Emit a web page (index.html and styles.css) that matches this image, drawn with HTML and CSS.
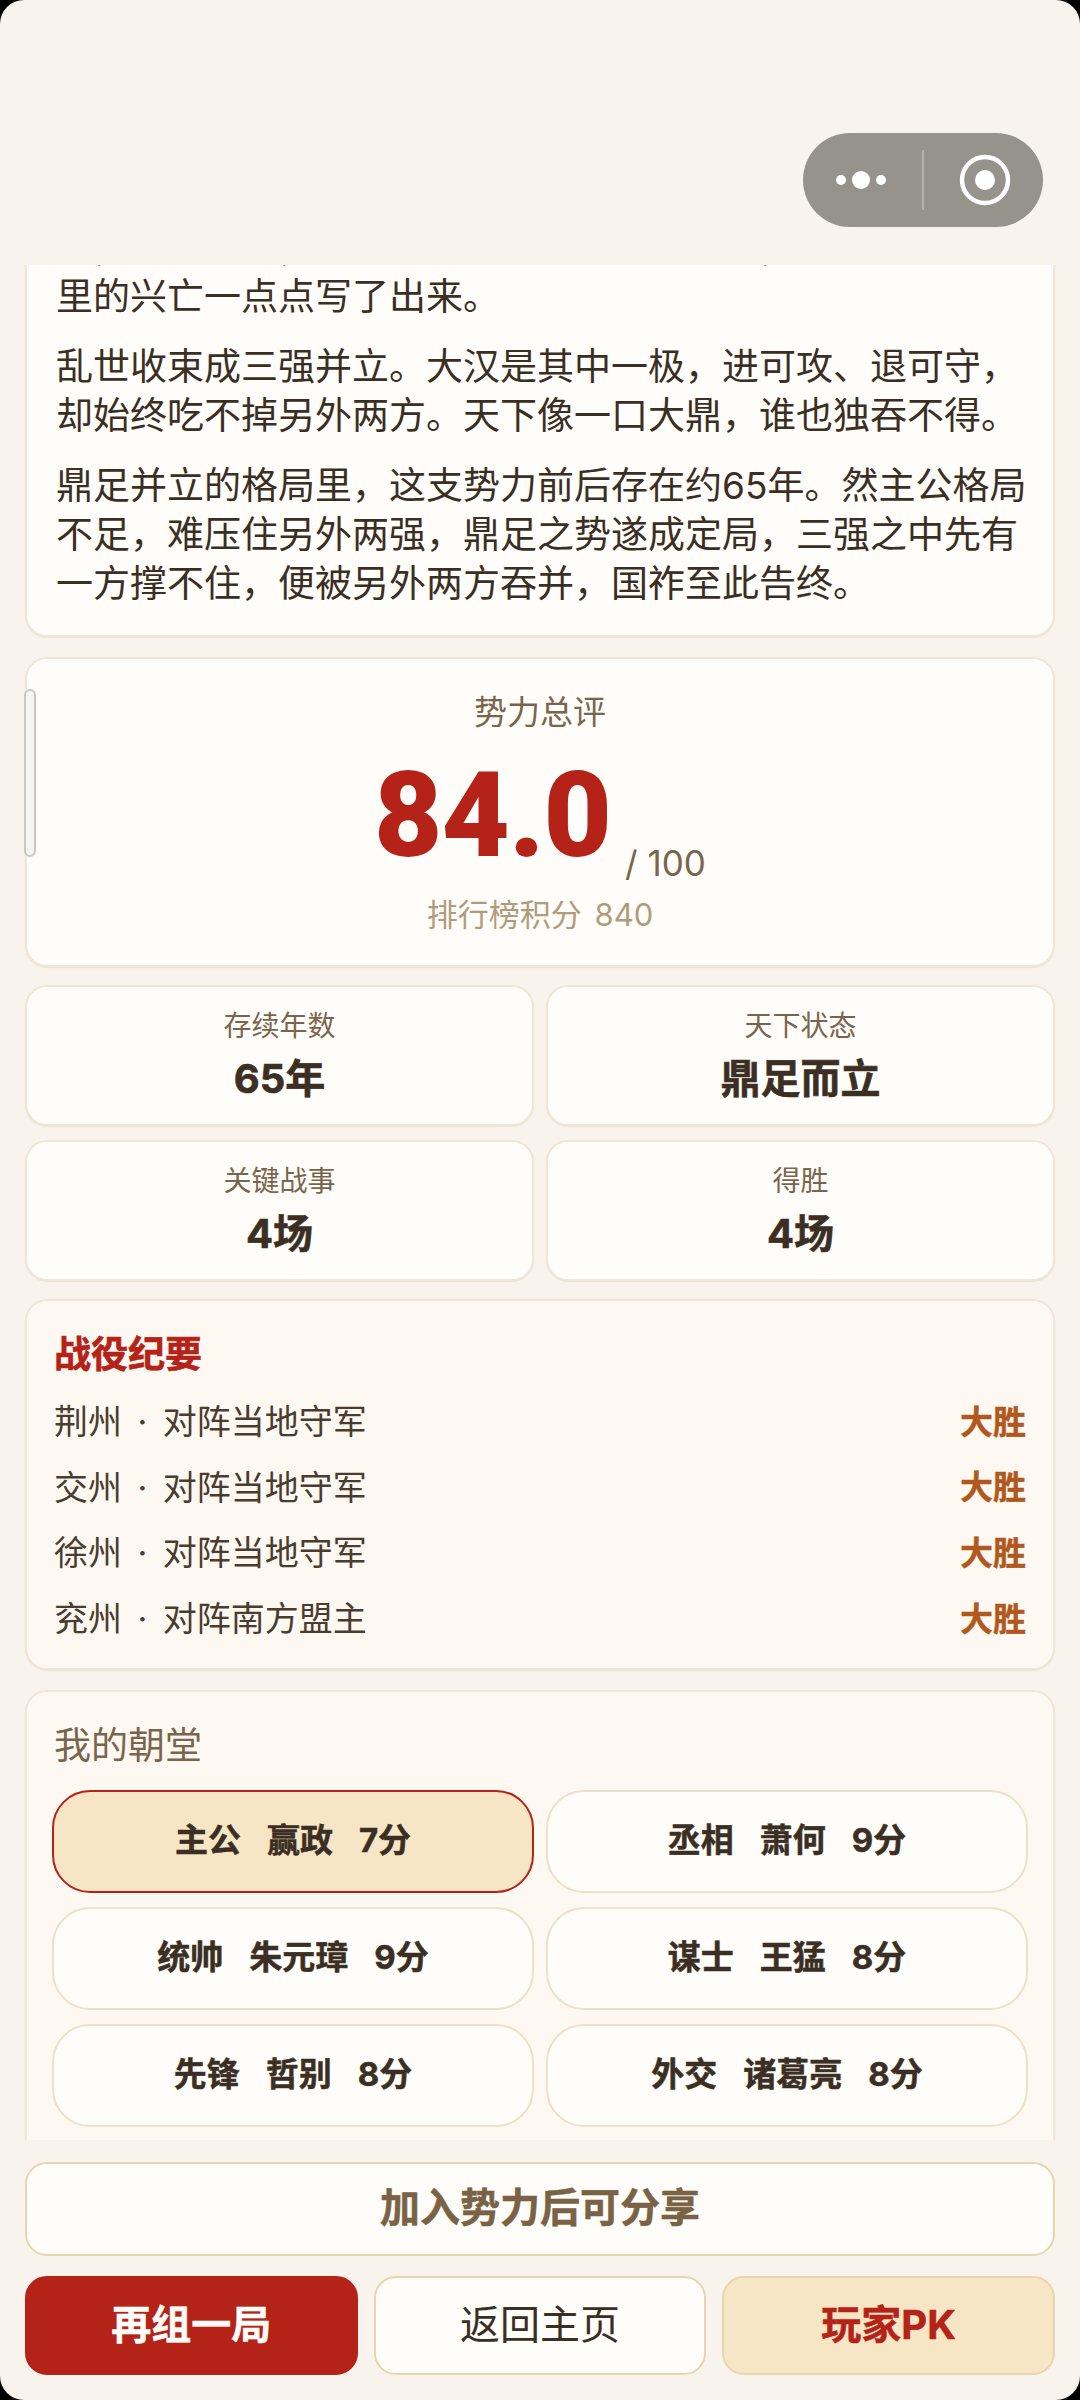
FILE: index.html
```html
<!DOCTYPE html>
<html lang="zh-CN">
<head>
<meta charset="utf-8">
<title>势力总评</title>
<link rel="stylesheet" href="styles.css">
</head>
<body>
<div class="app">
  <header class="topbar">
    <div class="capsule">
      <svg class="capsule-more" width="60" height="20" viewBox="0 0 60 20"><circle cx="10" cy="10" r="5" fill="#fff"/><circle cx="30" cy="10" r="9" fill="#fff"/><circle cx="50" cy="10" r="5" fill="#fff"/></svg>
      <span class="capsule-line"></span>
      <svg class="capsule-close" width="52" height="52" viewBox="0 0 52 52"><circle cx="26" cy="26" r="23" fill="none" stroke="#fff" stroke-width="4.5"/><circle cx="26" cy="26" r="10" fill="#fff"/></svg>
    </div>
  </header>

  <main class="scroll">
    <section class="card story">
      <p><span class="story-cut">汉，史官提笔，将这些年的征伐与成败都记，又把这山河</span>里的兴亡一点点写了出来。</p>
      <p>乱世收束成三强并立。大汉是其中一极，进可攻、退可守，<br>却始终吃不掉另外两方。天下像一口大鼎，谁也独吞不得。</p>
      <p>鼎足并立的格局里，这支势力前后存在约65年。然主公格局<br>不足，难压住另外两强，鼎足之势遂成定局，三强之中先有<br>一方撑不住，便被另外两方吞并，国祚至此告终。</p>
    </section>

    <section class="card score">
      <div class="score-label">势力总评</div>
      <div class="score-main"><span class="score-num">84.0</span><span class="score-max">/ 100</span></div>
      <div class="score-rank">排行榜积分 840</div>
    </section>

    <section class="stats">
      <div class="card stat"><div class="stat-label">存续年数</div><div class="stat-value">65年</div></div>
      <div class="card stat"><div class="stat-label">天下状态</div><div class="stat-value">鼎足而立</div></div>
      <div class="card stat"><div class="stat-label">关键战事</div><div class="stat-value">4场</div></div>
      <div class="card stat"><div class="stat-label">得胜</div><div class="stat-value">4场</div></div>
    </section>

    <section class="card soft battles">
      <h2 class="battles-title">战役纪要</h2>
      <div class="battle"><span>荆州<i class="sep">·</i>对阵当地守军</span><strong>大胜</strong></div>
      <div class="battle"><span>交州<i class="sep">·</i>对阵当地守军</span><strong>大胜</strong></div>
      <div class="battle"><span>徐州<i class="sep">·</i>对阵当地守军</span><strong>大胜</strong></div>
      <div class="battle"><span>兖州<i class="sep">·</i>对阵南方盟主</span><strong>大胜</strong></div>
    </section>

    <section class="card soft court">
      <h2 class="court-title">我的朝堂</h2>
      <div class="court-grid">
        <div class="chip chip-on"><span>主公</span><span>赢政</span><span>7分</span></div>
        <div class="chip"><span>丞相</span><span>萧何</span><span>9分</span></div>
        <div class="chip"><span>统帅</span><span>朱元璋</span><span>9分</span></div>
        <div class="chip"><span>谋士</span><span>王猛</span><span>8分</span></div>
        <div class="chip"><span>先锋</span><span>哲别</span><span>8分</span></div>
        <div class="chip"><span>外交</span><span>诸葛亮</span><span>8分</span></div>
      </div>
    </section>
  </main>

  <footer class="footer">
    <div class="btn btn-share">加入势力后可分享</div>
    <div class="btn-row">
      <div class="btn btn-red">再组一局</div>
      <div class="btn btn-plain">返回主页</div>
      <div class="btn btn-gold">玩家PK</div>
    </div>
  </footer>

  <div class="scrollbar"></div>
</div>
</body>
</html>
```
FILE: styles.css
```css
* { box-sizing: border-box; }
html, body { margin: 0; padding: 0; background: #000; }
body { font-family: Inter, "Noto Sans CJK SC", sans-serif; color: #3b2f24; }
h2, p { margin: 0; font-weight: inherit; }

.app {
  position: relative;
  width: 1080px;
  height: 2400px;
  display: flex;
  flex-direction: column;
  background: #f8f4ed;
  border-radius: 24px;
  overflow: hidden;
}

.topbar { position: relative; flex: 0 0 265px; }
.capsule {
  position: absolute;
  left: 803px;
  top: 133px;
  width: 240px;
  height: 94px;
  border-radius: 47px;
  background: #96938d;
  display: flex;
  align-items: center;
}
.capsule-more { margin-left: 28px; }
.capsule-line { width: 2px; height: 60px; margin-left: 31px; background: #b5b2ac; }
.capsule-close { margin-left: 35px; }

.scroll {
  flex: 1 1 0;
  min-height: 0;
  overflow: hidden;
  padding: 0 25px;
  display: flex;
  flex-direction: column;
}

.card {
  flex: none;
  background: #fffdf9;
  border: 2px solid #efe6d8;
  border-radius: 22px;
  box-shadow: 0 1px 1px rgba(140, 110, 70, 0.12);
}
.soft { background: #fdf9f2; }

.story {
  margin-top: -71.5px;
  padding: 28px 29px 27.5px;
  font-size: 37px;
  line-height: 49px;
  color: #3b2f24;
  white-space: nowrap;
  display: flex;
  flex-direction: column;
  gap: 21px;
}
.story-cut { display: block; margin-bottom: -1px; }

.score {
  margin-top: 20px;
  height: 310px;
  padding-top: 30px;
  text-align: center;
}
.score-label { font-size: 33px; line-height: 46px; color: #7a654c; }
.score-main { display: flex; justify-content: center; align-items: flex-end; height: 128px; margin-top: 17px; }
.score-num { font-family: Roboto, sans-serif; font-size: 118px; line-height: 128px; font-weight: 900; letter-spacing: -1px; color: #b52217; }
.score-max { font-size: 35px; line-height: 44px; margin-left: 14px; color: #7a654c; margin-bottom: -5px; }
.score-rank { font-size: 31px; line-height: 46px; margin-top: 12px; color: #b09c7c; word-spacing: 4px; }

.stats {
  flex: none;
  margin-top: 18px;
  display: grid;
  grid-template-columns: 1fr 1fr;
  gap: 14px 12px;
}
.stat { height: 141px; padding-top: 19px; text-align: center; }
.stat-label { font-size: 28px; line-height: 40px; color: #7a654c; }
.stat-value { font-size: 40px; line-height: 56px; margin-top: 5px; font-weight: 700; -webkit-text-stroke: 0.6px currentColor; color: #3b2f24; }

.battles { margin-top: 18px; height: 371px; padding: 29px 27px 0; }
.battles-title { font-size: 37px; line-height: 50px; font-weight: 700; -webkit-text-stroke: 0.6px currentColor; color: #b52217; }
.battle {
  display: flex;
  justify-content: space-between;
  align-items: center;
  height: 65.6px;
  font-size: 34px;
  color: #4a3d2f;
}
.sep { font-style: normal; margin: 0 15.5px; }
.battle strong { font-weight: 700; font-size: 33px; -webkit-text-stroke: 0.4px currentColor; color: #b0581e; }
.battle:first-of-type { margin-top: 7px; }

.court { margin-top: 20px; padding: 29px 25px 40px; height: 480px; }
.court-title { font-size: 37px; line-height: 50px; margin-left: 2px; color: #7a654c; font-weight: 400; }
.court-grid {
  margin-top: 19px;
  display: grid;
  grid-template-columns: 1fr 1fr;
  grid-auto-rows: 103px;
  gap: 14px 12px;
}
.chip {
  display: flex;
  justify-content: center;
  align-items: center;
  gap: 26px;
  padding-bottom: 8px;
  background: #fffdf9;
  border: 2.5px solid #eee0c9;
  border-radius: 38px;
  font-size: 33px;
  font-weight: 700;
  -webkit-text-stroke: 0.5px currentColor;
  color: #3b2f24;
}
.chip-on { background: #f7e6c6; border-color: #b52217; }

.footer { flex: none; padding: 22px 25px 25px; display: flex; flex-direction: column; gap: 20px; }
.btn {
  display: flex;
  justify-content: center;
  align-items: center;
  padding-bottom: 8px;
  font-size: 40px;
  border-radius: 22px;
  border: 2.5px solid #e8d5ad;
}
.btn-share { height: 94px; background: #fffdf9; color: #7a6245; font-weight: 700; -webkit-text-stroke: 0.5px currentColor; }
.btn-row { display: grid; grid-template-columns: repeat(3, 1fr); gap: 16px; }
.btn-row .btn { height: 99px; }
.btn-red { background: #b52217; border-color: #b52217; color: #fffdf9; font-weight: 700; -webkit-text-stroke: 0.5px currentColor; }
.btn-plain { background: #fffdf9; color: #3b2f24; }
.btn-gold { background: #f7e6c6; color: #b52217; font-weight: 700; -webkit-text-stroke: 0.5px currentColor; }

.scrollbar {
  position: absolute;
  left: 24px;
  top: 689px;
  width: 12px;
  height: 168px;
  border: 2px solid #c9c7c2;
  border-radius: 6px;
  background: #f7f5f0;
}
```
